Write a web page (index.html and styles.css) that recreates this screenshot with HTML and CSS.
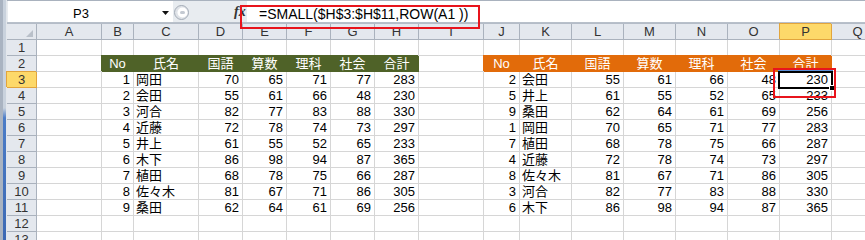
FILE: index.html
```html
<!DOCTYPE html>
<html lang="ja">
<head>
    <meta charset="UTF-8">
    <title>SMALL関数で並べ替え</title>
    <link rel="stylesheet" href="styles.css">
</head>
<body>
    <div class="screen">
        <div class="edge"></div>
        <div class="app">
            <div class="ribbon-foot">
                <span class="seg seg1"></span>
                <span class="seg seg2"></span>
                <span class="seg seg3"></span>
                <span class="seg seg4"></span>
            </div>

            <div class="formula-bar">
                <div class="name-box">
                    <span class="name-text">P3</span>
                    <svg class="drop" width="7" height="4" viewBox="0 0 7 4"><path d="M0 0h7L3.5 4z" fill="#111"/></svg>
                </div>
                <svg class="splitter" width="15" height="15" viewBox="0 0 15 15">
                    <circle cx="7.5" cy="7.5" r="7" fill="#dfe3e8" stroke="#a3abb6"/>
                    <circle cx="8.5" cy="7.5" r="5" fill="#fff"/>
                    <rect x="6" y="6" width="5" height="3" rx="1.5" fill="#c4cad2"/>
                </svg>
                <div class="fx">fx</div>
                <div class="formula">=SMALL($H$3:$H$11,ROW(A1 ))</div>
            </div>
            <div class="bar-gap"></div>

            <div class="sheet" id="sheet"></div>
        </div>

        <div class="mark mark-formula"></div>
        <div class="mark mark-cell"></div>
    </div>

    <script>
        const cols = ['A', 'B', 'C', 'D', 'E', 'F', 'G', 'H', 'I', 'J', 'K', 'L', 'M', 'N', 'O', 'P', 'Q'];
        const heads = ['No', '氏名', '国語', '算数', '理科', '社会', '合計'];

        const scores = [
            [1, '岡田', 70, 65, 71, 77, 283],
            [2, '会田', 55, 61, 66, 48, 230],
            [3, '河合', 82, 77, 83, 88, 330],
            [4, '近藤', 72, 78, 74, 73, 297],
            [5, '井上', 61, 55, 52, 65, 233],
            [6, '木下', 86, 98, 94, 87, 365],
            [7, '植田', 68, 78, 75, 66, 287],
            [8, '佐々木', 81, 67, 71, 86, 305],
            [9, '桑田', 62, 64, 61, 69, 256]
        ];

        // sorted by total, as SMALL() returns them
        const sorted = scores.slice().sort((a, b) => a[6] - b[6]);

        const sheet = document.getElementById('sheet');

        function addCell(text, cls) {
            const div = document.createElement('div');
            div.className = 'cell ' + cls;
            div.textContent = text;
            sheet.appendChild(div);
            return div;
        }

        const corner = addCell('', 'hd corner');
        corner.innerHTML = '<svg width="7" height="7" viewBox="0 0 7 7"><path d="M7 0v7H0z" fill="#b9c0c9"/></svg>';
        cols.forEach(c => addCell(c, c === 'P' ? 'hd sel' : 'hd'));

        for (let r = 1; r <= 13; r++) {
            addCell(r, r === 3 ? 'hd rh sel' : 'hd rh');

            const row = new Array(cols.length).fill(null);
            if (r === 2) {
                heads.forEach((h, i) => {
                    row[1 + i] = { text: h, cls: 'head green' };
                    row[9 + i] = { text: h, cls: 'head orange' };
                });
            }
            if (r >= 3 && r <= 11) {
                const a = scores[r - 3];
                const b = sorted[r - 3];
                a.forEach((v, i) => row[1 + i] = { text: v, cls: i === 1 ? 'label' : 'num' });
                b.forEach((v, i) => row[9 + i] = { text: v, cls: i === 1 ? 'label' : 'num' });
            }

            row.forEach((spec, i) => {
                const div = addCell(spec ? spec.text : '', spec ? spec.cls : '');
                if (r === 3 && cols[i] === 'P') {
                    div.classList.add('active');
                    div.insertAdjacentHTML('beforeend', '<span class="cursor"><span class="handle"></span></span>');
                }
            });
        }
    </script>
</body>
</html>
```

FILE: styles.css
```css
* {
    margin: 0;
    padding: 0;
    box-sizing: border-box;
}

body {
    font-family: 'Liberation Sans', 'Noto Sans CJK JP', sans-serif;
    background: #fff;
    width: 865px;
    height: 240px;
    overflow: hidden;
}

.screen {
    position: relative;
    display: flex;
    width: 865px;
    height: 240px;
    overflow: hidden;
}

.edge {
    width: 7px;
    flex: none;
    background:
        linear-gradient(to right, #a9b3c1 0, #a9b3c1 3px, transparent 3px, transparent 6px, #e3e7ec 6px),
        linear-gradient(to bottom, #c9d2dd 0, #c9d2dd 108px, #4b7cc7 118px, #3c69b4 100%);
}

.app {
    flex: 1;
    min-width: 0;
    display: flex;
    flex-direction: column;
    background: #e8ecf0;
}

.ribbon-foot {
    display: flex;
    height: 4px;
    background: #dfe4ea;
    border-bottom: 1px solid #a9b2be;
}

.seg {
    border-right: 1px solid #b3bbc6;
}

.seg1 { width: 87px; }
.seg2 { width: 547px; }
.seg3 { width: 143px; }
.seg4 { flex: 1; border-right: none; }

.formula-bar {
    display: flex;
    align-items: flex-start;
    height: 22px;
    border-bottom: 1px solid #b8c0ca;
}

.name-box {
    display: flex;
    align-items: center;
    width: 165px;
    height: 21px;
    margin-left: 1px;
    background: #fff;
}

.name-text {
    width: 146px;
    text-align: center;
    font-size: 13px;
    line-height: 17px;
    padding-top: 4px;
    color: #000;
}

.drop {
    margin-left: 8px;
    margin-top: 2px;
}

.splitter {
    margin-left: 1px;
    margin-top: 4px;
}

.fx {
    width: 12px;
    margin-left: 45px;
    font-family: 'Liberation Serif', serif;
    font-style: italic;
    font-weight: bold;
    font-size: 14px;
    line-height: 18px;
    padding-top: 2px;
    color: #333;
}

.formula {
    flex: 1;
    height: 21px;
    margin-left: 1px;
    padding: 4px 0 0 12px;
    background: #fff;
    font-size: 14px;
    line-height: 18px;
    color: #000;
    white-space: nowrap;
}

.bar-gap {
    height: 4px;
    background: #eef1f4;
    border-bottom: 1px solid #b4bcc7;
}

.sheet {
    display: grid;
    grid-template-columns: 30px 65px 32px 65px 44px 44px 44px 44px 44px 65px 36px 52px 52px 52px 52px 52px 52px 52px;
    grid-auto-rows: 16px;
    background: #fff;
}

.cell {
    border-right: 1px solid #d6d6d6;
    border-bottom: 1px solid #d6d6d6;
    padding: 0 3px 0 2px;
    font-size: 13px;
    line-height: 15px;
    color: #000;
    white-space: nowrap;
    overflow: hidden;
}

.num {
    text-align: right;
}

.label {
    text-align: left;
}

.hd {
    background: #e4e8ee;
    border-color: #aab2bd;
    color: #333;
    text-align: center;
    padding: 0;
}

.hd.sel {
    background: #fdd96a;
    border-color: #e2a53c;
    box-shadow: -1px -1px 0 #e2a53c;
}

.corner {
    display: flex;
    justify-content: flex-end;
    align-items: flex-end;
    padding: 0 3px 2px 0;
}

.head {
    color: #fff;
    text-align: center;
    padding: 0;
}

.green {
    background: #4f6228;
    border-color: #4f6228;
    box-shadow: -1px -1px 0 #4f6228;
}

.orange {
    background: #e26b0a;
    border-color: #e26b0a;
    box-shadow: -1px -1px 0 #e26b0a;
}

.active {
    position: relative;
    overflow: visible;
}

.cursor {
    position: absolute;
    left: -2px;
    top: -1px;
    right: -2px;
    bottom: -2px;
    border: 2px solid #000;
    box-shadow: 0 -1px 0 #5b8fd6;
}

.handle {
    position: absolute;
    right: -4px;
    bottom: -4px;
    width: 6px;
    height: 6px;
    background: #000;
    border: 1px solid #fff;
}

.mark {
    position: absolute;
    border: 2px solid #e8141c;
}

.mark-formula {
    left: 240px;
    top: 5px;
    width: 240px;
    height: 24px;
}

.mark-cell {
    left: 773px;
    top: 68px;
    width: 63px;
    height: 30px;
}
```
